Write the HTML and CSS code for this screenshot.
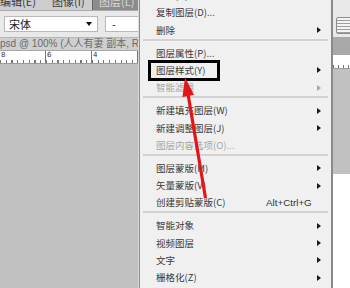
FILE: index.html
```html
<!DOCTYPE html>
<html lang="zh-CN">
<head>
    <meta charset="UTF-8">
    <title>图层菜单</title>
    <link rel="stylesheet" href="styles.css">
</head>
<body>
    <div class="workspace">
        <div class="tabs">
            <span class="tab">编辑(E)</span>
            <span class="tab">图像(I)</span>
            <span class="tab active">图层(L)</span>
        </div>
        <div class="options">
            <div class="font-box">宋体<span class="caret"></span></div>
            <div class="size-box">-</div>
        </div>
        <div class="doc-tab">psd @ 100% (人人有妻 副本, RGB/8)</div>
        <div class="ruler">
            <span class="mark">8</span>
            <span class="mark">6</span>
            <span class="mark">4</span>
        </div>
        <div class="canvas"></div>
    </div>

    <div class="menu">
        <div class="item first">新建(N)<i class="arrow"></i></div>
        <div class="item">复制图层(D)...</div>
        <div class="item">删除<i class="arrow"></i></div>
        <div class="sep"></div>
        <div class="item">图层属性(P)...</div>
        <div class="item">图层样式(Y)<i class="arrow"></i></div>
        <div class="item off">智能滤镜<i class="arrow"></i></div>
        <div class="sep"></div>
        <div class="item">新建填充图层(W)<i class="arrow"></i></div>
        <div class="item">新建调整图层(J)<i class="arrow"></i></div>
        <div class="item off">图层内容选项(O)...</div>
        <div class="sep"></div>
        <div class="item">图层蒙版(M)<i class="arrow"></i></div>
        <div class="item">矢量蒙版(V)<i class="arrow"></i></div>
        <div class="item">创建剪贴蒙版(C)<span class="keys">Alt+Ctrl+G</span></div>
        <div class="sep"></div>
        <div class="item">智能对象<i class="arrow"></i></div>
        <div class="item">视频图层<i class="arrow"></i></div>
        <div class="item">文字<i class="arrow"></i></div>
        <div class="item">栅格化(Z)<i class="arrow"></i></div>
        <div class="highlight-box"></div>
    </div>

    <div class="side">
        <div class="side-top"><span class="side-btn"></span></div>
        <div class="side-band"></div>
        <div class="side-ruler"></div>
        <div class="side-canvas"></div>
        <div class="side-blank"></div>
    </div>

    <!-- red pointer drawn over the menu -->
    <svg class="pointer" width="350" height="288" viewBox="0 0 350 288">
        <line x1="205.5" y1="198" x2="188" y2="94" stroke="#e3151a" stroke-width="3.2"/>
        <polygon points="185,77 194,95 182.5,97" fill="#e3151a"/>
    </svg>
</body>
</html>
```

FILE: styles.css
```css
body {
    margin: 0;
    width: 350px;
    height: 288px;
    overflow: hidden;
    display: flex;
    position: relative;
    font-family: "Noto Sans CJK SC", "Liberation Sans", sans-serif;
    background: #c1c1c1;
}

/* left part: photoshop workspace */
.workspace {
    width: 139px;
    display: flex;
    flex-direction: column;
    flex-shrink: 0;
}

.tabs {
    height: 10px;
    background: #cdcdcd;
    display: flex;
    overflow: hidden;
    border-bottom: 1px solid #a9a9a9;
}

.tab {
    font-size: 11px;
    line-height: 12px;
    margin-top: -5px;
    color: #3c3c3c;
    width: 52px;
    flex-shrink: 0;
}

.tab.active {
    background: #8c8c8c;
    color: #d8d8d8;
    width: 40px;
    padding-left: 6px;
    margin-left: -12px;
    margin-top: 0;
    line-height: 2px;
    border-left: 1px solid #666;
}

.options {
    height: 26px;
    background: #e9e9e9;
    display: flex;
    align-items: center;
    gap: 7px;
    padding-left: 4px;
    border-bottom: 1px solid #b5b5b5;
}

.font-box {
    width: 88px;
    height: 14px;
    background: #fff;
    border: 1px solid #b8b8b8;
    font-size: 11px;
    line-height: 14px;
    color: #222;
    padding-left: 4px;
    position: relative;
}

.caret {
    position: absolute;
    right: 5px;
    top: 5px;
    border-top: 4px solid #111;
    border-left: 3px solid transparent;
    border-right: 3px solid transparent;
}

.size-box {
    flex: 1;
    height: 14px;
    background: #fff;
    border: 1px solid #b8b8b8;
    border-right: none;
    font-size: 11px;
    line-height: 14px;
    padding-left: 6px;
    color: #222;
}

.doc-tab {
    height: 12px;
    background: #cfcfcf;
    font-family: "Liberation Sans", "Noto Sans CJK SC", sans-serif;
    font-size: 10px;
    line-height: 12px;
    color: #6a6a6a;
    white-space: nowrap;
    overflow: hidden;
    border-bottom: 1px solid #a8a8a8;
}

.ruler {
    height: 12px;
    display: flex;
    border-bottom: 1px solid #9a9a9a;
    background: #fff repeating-linear-gradient(90deg, #777 0 1px, transparent 1px 5.75px) 0 100% / 100% 3px no-repeat;
}

.mark {
    width: 46px;
    height: 12px;
    border-right: 1px solid #777;
    font-family: "DejaVu Sans", sans-serif;
    font-size: 7px;
    line-height: 9px;
    color: #333;
    padding-left: 1px;
    box-sizing: border-box;
    flex-shrink: 0;
}

.canvas {
    flex: 1;
    background: #c1c1c1;
}

/* the layer menu */
.menu {
    width: 191px;
    flex-shrink: 0;
    background: #f0f0f0;
    border-left: 1px solid #8e8e8e;
    border-right: 2px solid #8a8a8a;
    box-shadow: -1px 0 0 #d9d9d9;
    position: relative;
    padding-top: 4.4px;
}

.item {
    height: 17.2px;
    line-height: 17.2px;
    font-size: 9.5px;
    color: #383838;
    padding-left: 16px;
    position: relative;
    white-space: nowrap;
}

.item.first {
    margin-top: -17.2px;
}

.item.off {
    color: #a6a6a6;
}

.arrow {
    position: absolute;
    right: 10px;
    top: 5.5px;
    border-left: 4px solid #1a1a1a;
    border-top: 3.5px solid transparent;
    border-bottom: 3.5px solid transparent;
}

.item.off .arrow {
    border-left-color: #a8a8a8;
}

.keys {
    position: absolute;
    left: 126px;
    font-family: "Liberation Sans", sans-serif;
    font-size: 9.8px;
    color: #333;
}

.sep {
    height: 6px;
    margin: 0 3px;
    border-top: 2px solid #d2d2d2;
    box-sizing: border-box;
}

.highlight-box {
    position: absolute;
    left: 8px;
    top: 60px;
    width: 66px;
    height: 15px;
    border: 3px solid #000;
}

/* strip of panels on the right */
.side {
    flex: 1;
    display: flex;
    flex-direction: column;
}

.side-top {
    height: 37px;
    background: #e9e9e9;
    position: relative;
}

.side-btn {
    position: absolute;
    left: 3px;
    top: 17px;
    width: 20px;
    height: 15px;
    border: 1px solid #8d8d8d;
    border-radius: 2px;
    background: repeating-linear-gradient(180deg, #f4f4f4 0 2px, #9c9c9c 2px 3px);
}

.side-band {
    height: 18px;
    background: #a9a9a9;
}

.side-ruler {
    height: 13px;
    background: #fff repeating-linear-gradient(90deg, #777 0 1px, transparent 1px 5px) 0 100% / 100% 3px no-repeat;
    border-bottom: 1px solid #9a9a9a;
}

.side-canvas {
    height: 105px;
    background: #c1c1c1;
}

.side-blank {
    flex: 1;
    background: #fff;
}

.pointer {
    position: absolute;
    left: 0;
    top: 0;
    pointer-events: none;
}
```
